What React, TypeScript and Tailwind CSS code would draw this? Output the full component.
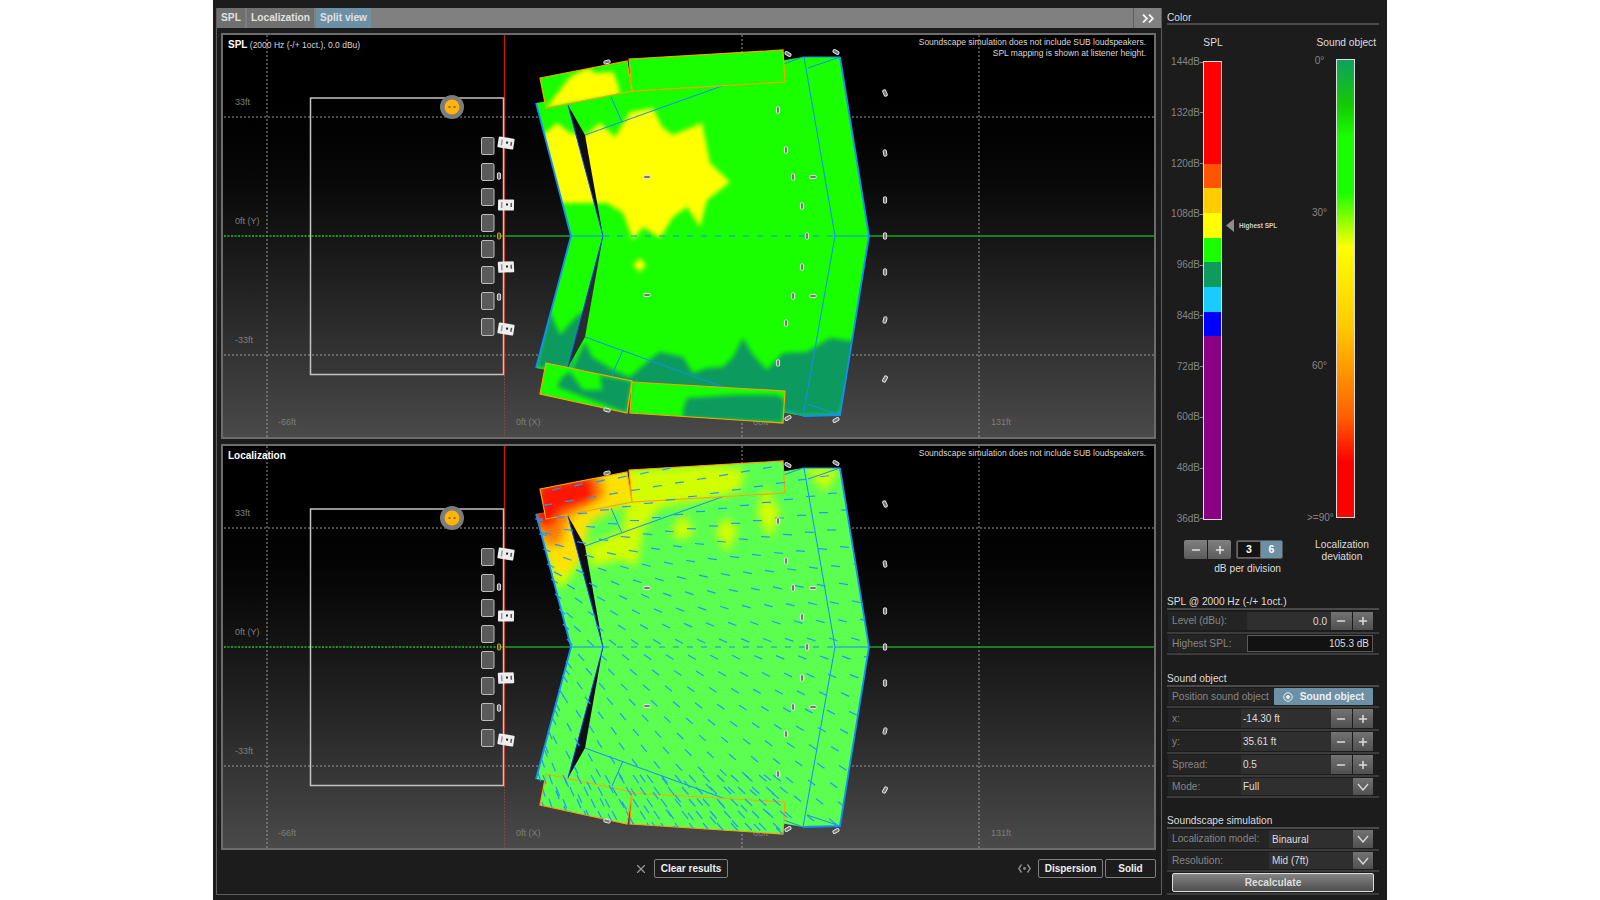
import React from 'react';
import { Minus, Plus, X } from 'lucide-react';

// Geometry is in page pixels of the upper plot; the lower plot uses the same numbers.
const HALL = '536,103 803,57 840,57 869,236 840,415 803,416 536,368 571,236';
const WEDGE_TOP = '568,105 585,135 603,236';
const WEDGE_BOTTOM = '568,367 585,337 603,236';
const BALCONY = [
  '540,78 627,61 632,91 546,108',
  '629,59 783,50 785,82 632,91',
  '546,363 632,381 627,413 540,394',
  '632,382 785,391 783,423 630,413',
];
const HALL_LINES = [
  [585, 135, 803, 57],
  [585, 337, 803, 416],
  [804, 57, 835, 236],
  [835, 236, 803, 416],
  [808, 68, 840, 57],
  [807, 404, 840, 415],
  [611, 97, 622, 122],
  [623, 350, 612, 375],
];

const SPEAKER_ROWS = [146, 172, 197, 223, 249, 275, 301, 327];
const SPEAKER_BOXES = [
  { y: 143, r: 9 },
  { y: 205, r: 1 },
  { y: 267, r: -3 },
  { y: 329, r: 9 },
];
const MARKERS = [
  { x: 885, y: 93, r: -25 },
  { x: 885, y: 153, r: -10 },
  { x: 885, y: 200, r: 0 },
  { x: 885, y: 236, r: 0 },
  { x: 885, y: 272, r: 0 },
  { x: 885, y: 320, r: 15 },
  { x: 885, y: 379, r: 30 },
  { x: 788, y: 54, r: -60 },
  { x: 836, y: 52, r: -60 },
  { x: 788, y: 418, r: 60 },
  { x: 836, y: 420, r: 60 },
  { x: 778, y: 110, r: 0 },
  { x: 786, y: 150, r: 0 },
  { x: 793, y: 177, r: 0 },
  { x: 813, y: 177, r: 90 },
  { x: 802, y: 206, r: 0 },
  { x: 807, y: 236, r: 0 },
  { x: 802, y: 267, r: 0 },
  { x: 793, y: 296, r: 0 },
  { x: 813, y: 296, r: 90 },
  { x: 786, y: 323, r: 0 },
  { x: 778, y: 363, r: 0 },
  { x: 647, y: 177, r: 90 },
  { x: 647, y: 295, r: 90 },
  { x: 607, y: 62, r: 75 },
  { x: 607, y: 410, r: 105 },
  { x: 499, y: 176, r: 0 },
  { x: 499, y: 297, r: 0 },
];

const SPL_YELLOW = [
  '585,135 600,123 615,137 630,112 653,108 662,127 673,135 702,123 710,163 730,182 707,200 700,227 687,207 673,217 660,238 643,227 633,240 623,213 607,203 595,203',
  '633,265 640,258 646,265 640,272',
  '543,135 557,123 570,133 585,135 600,203 560,203',
];
const SPL_TEAL = [
  '573,367 585,342 592,357 613,370 630,377 653,357 660,352 683,357 693,373 707,368 723,367 733,357 743,338 753,355 767,370 783,353 807,352 830,338 859,342 840,415 803,416 720,400 653,400 573,380',
  '549,310 560,335 578,315 585,312 570,368 536,368',
];
const SPL_BALCONY_YELLOW = '546,108 570,77 588,68 595,73 613,72 618,85 620,95';
const SPL_BALCONY_TEAL = [
  '557,387 562,377 570,372 583,390 602,390 600,375 632,381 627,413',
  '683,410 687,398 733,395 777,395 785,400 783,423 683,418',
];

const LOC_LIME = [
  '543,109 573,106 583,139 580,152 563,176 552,172',
  '585,136 623,119 630,59 710,54 745,58 740,80 703,89 660,96 643,119 637,155 625,150 617,149 593,156',
  '683,102 695,122 682,129 670,122',
  '727,106 738,119 727,142 715,119',
  '765,74 780,102 770,129 757,102',
  '805,57 840,57 825,81',
];
const LOC_YELLOW = '534,108 590,62 632,58 632,88 590,112 580,150 560,165 548,150';
const LOC_ORANGE = '534,112 540,74 600,62 606,85 570,106 560,135 546,135';
const LOC_RED = '534,112 538,74 592,64 596,90 562,100 550,118';

// Arrows point away from the sound object
const SOURCE = { x: 453, y: 107 };

function arrow(x: number, y: number, len: number) {
  const a = Math.atan2(y - SOURCE.y, x - SOURCE.x);
  return { x1: x, y1: y, x2: x + Math.cos(a) * len, y2: y + Math.sin(a) * len };
}

function buildArrows() {
  const out: ReturnType<typeof arrow>[] = [];
  for (let row = 0; row < 24; row++) {
    for (let col = 0; col < 16; col++) {
      const x = 530 + col * 22 + (row % 2) * 11 + ((row * 7) % 5);
      const y = 52 + row * 16;
      // rows fan out slightly towards the right
      out.push(arrow(x, y + ((x - 700) * (y - 236)) / 1000, 9));
    }
  }
  // denser field on the lower balcony
  for (let row = 0; row < 5; row++) {
    for (let col = 0; col < 18; col++) {
      out.push(arrow(535 + col * 14 + (row % 2) * 7, 364 + row * 12, 10));
    }
  }
  return out;
}

function buildEdgeArrows() {
  const out: ReturnType<typeof arrow>[] = [];
  for (let i = 0; i < 9; i++) out.push(arrow(535 + i * 4, 108 + i * 15, 8));
  for (let i = 0; i < 9; i++) out.push(arrow(566 - i * 3.5, 250 + i * 14, 9));
  return out;
}

const ARROWS = buildArrows();
const EDGE_ARROWS = buildEdgeArrows();

const Plot: React.FC<{ mode: 'spl' | 'loc' }> = ({ mode }) => {
  const spl = mode === 'spl';
  const clipHall = `hall-${mode}`;
  const clipAll = `all-${mode}`;
  const clipBalcony = `balcony-${mode}`;
  const blur = `blur-${mode}`;
  const base = spl ? '#19ff00' : '#5aff50';

  const locHeat = (
    <g filter={`url(#${blur})`}>
      {LOC_LIME.map((p) => (
        <polygon key={p} points={p} fill="#d2ff00" />
      ))}
      <polygon points={LOC_YELLOW} fill="#ffe000" />
      <polygon points={LOC_ORANGE} fill="#ff8000" />
      <polygon points={LOC_RED} fill="#ff1400" />
    </g>
  );

  return (
    <div className="relative h-[406px] w-[935px] border-2 border-[#6c6c6c] bg-gradient-to-b from-black from-[4%] to-[#4a4a4a]">
      <svg viewBox="223 35 931 402" className="block h-[402px] w-[931px]" fontFamily="'Liberation Sans', Arial, sans-serif">
        <defs>
          <clipPath id={clipHall}>
            <polygon points={HALL} />
          </clipPath>
          <clipPath id={clipBalcony}>
            {BALCONY.map((p) => (
              <polygon key={p} points={p} />
            ))}
          </clipPath>
          <clipPath id={clipAll}>
            <polygon points={HALL} />
            {BALCONY.map((p) => (
              <polygon key={p} points={p} />
            ))}
          </clipPath>
          <filter id={blur} x="-30%" y="-30%" width="160%" height="160%">
            <feGaussianBlur stdDeviation={spl ? 2.2 : 4} />
          </filter>
        </defs>

        {/* grid */}
        <g stroke="#9a9a9a" strokeWidth="1" strokeDasharray="2 2">
          <line x1="224" y1="117" x2="1154" y2="117" />
          <line x1="224" y1="355" x2="1154" y2="355" />
          <line x1="267" y1="35" x2="267" y2="437" />
          <line x1="742" y1="35" x2="742" y2="437" />
          <line x1="979" y1="35" x2="979" y2="437" />
        </g>
        <line x1="224" y1="236" x2="503" y2="236" stroke="#1fc41f" strokeWidth="1.3" strokeDasharray="2 1.5" />
        <line x1="504" y1="236" x2="1154" y2="236" stroke="#1ea01e" strokeWidth="1.4" />
        <line x1="504.5" y1="35" x2="504.5" y2="375" stroke="#c41a00" strokeWidth="1.5" />
        <line x1="504.5" y1="375" x2="504.5" y2="437" stroke="#7a4a40" strokeWidth="1" strokeDasharray="2 1" />

        <g fontSize="9" fill="#7e7e7e">
          <text x="235" y="105">33ft</text>
          <text x="235" y="224">0ft (Y)</text>
          <text x="235" y="343">-33ft</text>
          <text x="278" y="425">-66ft</text>
          <text x="516" y="425">0ft (X)</text>
          <text x="753" y="425">66ft</text>
          <text x="991" y="425">131ft</text>
        </g>

        {/* room */}
        <rect x="310.5" y="98" width="193" height="276.5" fill="none" stroke="#c4c4c4" strokeWidth="1.5" />
        {SPEAKER_ROWS.map((y) => (
          <rect key={y} x="481.5" y={y - 8.5} width="12.5" height="17" rx="1.5" fill="#5a5a5a" stroke="#bdbdbd" strokeWidth="1" />
        ))}
        {SPEAKER_BOXES.map((b) => (
          <g key={b.y} transform={`translate(506 ${b.y}) rotate(${b.r})`}>
            <rect x="-8" y="-5.5" width="16" height="11" rx="1" fill="#eeeeee" />
            <rect x="-5" y="-3" width="1.5" height="6" fill="#999999" />
            <rect x="0" y="-1.5" width="2" height="2" fill="#222222" />
            <rect x="4.5" y="-2" width="1.5" height="4" fill="#555555" />
          </g>
        ))}
        <rect x="497.5" y="233" width="3" height="6" rx="1" fill="#555500" stroke="#c8c820" strokeWidth=".8" />

        <circle cx="452" cy="107" r="12" fill="#7c7c7c" />
        <circle cx="452" cy="107" r="7.5" fill="#ffb40a" />
        <rect x="448.5" y="106.5" width="2" height="1" fill="#332200" />
        <rect x="453.5" y="106.5" width="2" height="1" fill="#332200" />

        {/* coverage */}
        <polygon points={HALL} fill={base} />
        <g clipPath={`url(#${clipHall})`}>
          {spl ? (
            <g filter={`url(#${blur})`}>
              {SPL_TEAL.map((p) => (
                <polygon key={p} points={p} fill="#0f9a5e" />
              ))}
              {SPL_YELLOW.map((p) => (
                <polygon key={p} points={p} fill="#ffff00" />
              ))}
            </g>
          ) : (
            locHeat
          )}
        </g>
        <polygon points={WEDGE_TOP} fill="#0e0e12" />
        <polygon points={WEDGE_BOTTOM} fill={spl ? '#2c2c30' : '#101014'} />
        <g stroke="#128cff" strokeWidth="1" fill="none">
          <polyline points="536,103 571,236 536,368" strokeWidth="1.8" />
          <polyline points="840,57 869,236 840,415 803,416" strokeWidth="1.8" />
          <polyline points="803,57 840,57" />
          <polyline points="568,105 603,236 568,367" stroke="#0a3cff" />
          <line x1="571" y1="236" x2="603" y2="236" />
          <line x1="835" y1="236" x2="869" y2="236" />
          <line x1="603" y1="236" x2="835" y2="236" strokeDasharray="6 8" />
          {HALL_LINES.map((l) => (
            <line key={l.join()} x1={l[0]} y1={l[1]} x2={l[2]} y2={l[3]} />
          ))}
        </g>

        {/* balcony */}
        {BALCONY.map((p) => (
          <polygon key={p} points={p} fill={base} />
        ))}
        <g clipPath={`url(#${clipBalcony})`}>
          {spl ? (
            <g filter={`url(#${blur})`}>
              <polygon points={SPL_BALCONY_YELLOW} fill="#ffff00" />
              {SPL_BALCONY_TEAL.map((p) => (
                <polygon key={p} points={p} fill="#0f9a5e" />
              ))}
            </g>
          ) : (
            locHeat
          )}
        </g>
        {BALCONY.map((p) => (
          <polygon key={p} points={p} fill="none" stroke="#ffa200" strokeWidth="1.2" />
        ))}

        {!spl ? (
          <g stroke="#2098ff" strokeWidth="1.2">
            <g clipPath={`url(#${clipAll})`}>
              {ARROWS.map((a, i) => (
                <line key={i} {...a} />
              ))}
            </g>
            {EDGE_ARROWS.map((a, i) => (
              <line key={i} {...a} />
            ))}
          </g>
        ) : null}

        {MARKERS.map((m) => (
          <rect
            key={`${m.x}-${m.y}`}
            x={m.x - 1.6}
            y={m.y - 3.2}
            width="3.2"
            height="6.4"
            rx="1.2"
            fill="#777777"
            stroke="#eeeeee"
            strokeWidth=".9"
            transform={`rotate(${m.r} ${m.x} ${m.y})`}
          />
        ))}
      </svg>

      {spl ? (
        <>
          <div className="absolute left-[5px] top-[3px] text-[8.5px] leading-[14px] text-[#d8d8d8]">
            <span className="text-[10px] font-bold text-white">SPL</span> (2000 Hz (-/+ 1oct.), 0.0 dBu)
          </div>
          <div className="absolute right-[8px] top-[2px] text-right text-[8.5px] leading-[10.5px] text-[#d8d8d8]">
            Soundscape simulation does not include SUB loudspeakers.
            <br />
            SPL mapping is shown at listener height.
          </div>
        </>
      ) : (
        <>
          <div className="absolute left-[5px] top-[3px] text-[10px] font-bold leading-[14px] text-white">Localization</div>
          <div className="absolute right-[8px] top-[2px] text-right text-[8.5px] leading-[10.5px] text-[#d8d8d8]">
            Soundscape simulation does not include SUB loudspeakers.
          </div>
        </>
      )}
    </div>
  );
};

const SPL_SCALE = ['144dB', '132dB', '120dB', '108dB', '96dB', '84dB', '72dB', '60dB', '48dB', '36dB'];

const SPL_BANDS = [
  'h-[102px] bg-[#ff0000]',
  'h-[24px] bg-[#ff5500]',
  'h-[25px] bg-[#ffcc00]',
  'h-[25px] bg-[#ffff00]',
  'h-[24px] bg-[#19ff00]',
  'h-[25px] bg-[#0f9a5e]',
  'h-[25px] bg-[#19ccff]',
  'h-[24px] bg-[#0000ff]',
  'flex-1 bg-[#8a0082]',
];

const Head: React.FC<{ children: React.ReactNode; className: string }> = ({ children, className }) => (
  <div className={`h-[15px] border-b-2 border-[#4a4a4a] text-[10.2px] leading-[13px] text-[#dddddd] ${className}`}>{children}</div>
);

const Row: React.FC<{ children: React.ReactNode; className: string }> = ({ children, className }) => (
  <div className={`flex items-center border-b-2 border-[#3c3c3c] pl-[1px] pr-[6px] ${className}`}>{children}</div>
);

const Label: React.FC<{ children: React.ReactNode; className: string }> = ({ children, className }) => (
  <div className={`flex h-full shrink-0 items-center bg-[#242424] pl-[4px] text-[10.2px] text-[#858585] ${className}`}>{children}</div>
);

const Steppers: React.FC = () => (
  <div className="flex h-full w-[42px] shrink-0 gap-px">
    <div className="flex flex-1 items-center justify-center bg-gradient-to-b from-[#737373] to-[#505050] text-[#dddddd]">
      <Minus size={12} strokeWidth={3} />
    </div>
    <div className="flex flex-1 items-center justify-center bg-gradient-to-b from-[#737373] to-[#505050] text-[#dddddd]">
      <Plus size={12} strokeWidth={3} />
    </div>
  </div>
);

const Chevron: React.FC = () => (
  <div className="flex h-full w-[20px] shrink-0 items-center justify-center bg-gradient-to-b from-[#737373] to-[#505050]">
    <svg width="12" height="8" viewBox="0 0 12 8" fill="none" stroke="#d8d8d8" strokeWidth="1.4">
      <polyline points="1,1 6,7 11,1" />
    </svg>
  </div>
);

const Field: React.FC<{ children: React.ReactNode; className: string }> = ({ children, className }) => (
  <div className={`flex h-full items-center bg-[#2f2f2f] text-[10px] text-[#dddddd] ${className}`}>{children}</div>
);

const Sidebar: React.FC = () => (
  <aside className="w-[225px] shrink-0 pl-[5px] pr-[8px]">
    <div className="h-[25px] border-b-2 border-[#4a4a4a] pt-[12px] text-[10.2px] leading-[12px] text-[#dddddd]">Color</div>

    <div className="mt-[12px] flex h-[12px] justify-between pr-[3px] text-[10.2px] leading-[12px] text-[#dddddd]">
      <div className="w-[92px] text-center">SPL</div>
      <div>Sound object</div>
    </div>

    <div className="mt-[7px] flex h-[469px]">
      <div className="flex w-[36px] flex-col justify-between text-[10px] leading-[12px] text-[#858585]">
        {SPL_SCALE.map((s) => (
          <div key={s} className="flex items-center justify-end">
            {s}
            <span className="h-px w-[3px] bg-[#858585]" />
          </div>
        ))}
      </div>
      <div className="mt-[5px] flex h-[459px] w-[19px] flex-col border border-[#dddddd]">
        {SPL_BANDS.map((b) => (
          <div key={b} className={b} />
        ))}
      </div>
      <div className="w-[85px] pl-[4px] pt-[163px]">
        <div className="flex items-center gap-[5px]">
          <svg width="8" height="13" viewBox="0 0 8 13">
            <polygon points="8,0 8,13 0,6.5" fill="#8c8c8c" />
          </svg>
          <span className="text-[6.5px] font-bold leading-[13px] text-[#cccccc]">Highest SPL</span>
        </div>
      </div>
      <div className="-mt-[1px] flex h-[469px] w-[25px] flex-col justify-between text-center text-[10px] leading-[12px] text-[#858585]">
        <div>0°</div>
        <div>30°</div>
        <div>60°</div>
        <div>&gt;=90°</div>
      </div>
      <div className="ml-[4px] mt-[3px] h-[459px] w-[19px] border border-[#dddddd] bg-[linear-gradient(to_bottom,#10a060_0%,#14cc00_10%,#19ff00_17%,#19ff00_29%,#ffff00_41%,#ffcc00_58%,#ff6000_78%,#ff0000_88%,#ff0000_100%)]" />
    </div>

    <div className="mt-[15px] flex">
      <div className="ml-[17px] w-[99px]">
        <div className="flex h-[19px] justify-between">
          <div className="flex w-[47px] gap-px overflow-hidden rounded-[2px]">
            <div className="flex flex-1 items-center justify-center bg-gradient-to-b from-[#808080] to-[#5c5c5c] text-[#e6e6e6]">
              <Minus size={12} strokeWidth={3} />
            </div>
            <div className="flex flex-1 items-center justify-center bg-gradient-to-b from-[#808080] to-[#5c5c5c] text-[#e6e6e6]">
              <Plus size={12} strokeWidth={3} />
            </div>
          </div>
          <div className="flex w-[47px] overflow-hidden rounded-[2px] border border-[#555555] text-[10.5px] font-bold text-white">
            <div className="flex w-[24px] items-center justify-center border border-[#666666] bg-[#141414]">3</div>
            <div className="flex flex-1 items-center justify-center bg-[#6c90a6]">6</div>
          </div>
        </div>
        <div className="mt-[4px] pr-[2px] text-right text-[10.2px] leading-[12px] text-[#dddddd]">dB per division</div>
      </div>
      <div className="-mt-[1px] ml-[29px] w-[60px] text-center text-[10.2px] leading-[11.5px] text-[#dddddd]">
        Localization deviation
      </div>
    </div>

    <Head className="mt-[20px]">SPL @ 2000 Hz (-/+ 1oct.)</Head>
    <Row className="h-[24px] py-[2px]">
      <Label className="w-[79px]">Level (dBu):</Label>
      <Field className="flex-1 justify-end pr-[4px]">0.0</Field>
      <Steppers />
    </Row>
    <Row className="h-[21px] py-[1px]">
      <Label className="w-[79px]">Highest SPL:</Label>
      <div className="flex h-full flex-1 items-center justify-end border border-[#5a5a5a] bg-[#121212] pr-[3px] text-[10px] text-[#dddddd]">
        105.3 dB
      </div>
    </Row>

    <Head className="mt-[17px]">Sound object</Head>
    <Row className="h-[21px] py-[1px]">
      <Label className="w-[106px]">Position sound object</Label>
      <div className="flex h-full w-[100px] items-center justify-center gap-[7px] rounded-[1px] bg-[#6c90a6] text-[10.2px] font-bold text-[#eeeeee]">
        <svg width="10" height="10" viewBox="0 0 10 10" fill="none">
          <circle cx="5" cy="5" r="4.2" stroke="#eeeeee" strokeWidth="1" />
          <circle cx="5" cy="5" r="2" fill="#eeeeee" />
        </svg>
        Sound object
      </div>
    </Row>
    {[
      { label: 'x:', value: '-14.30 ft', h: 'h-[23px] py-[1px]' },
      { label: 'y:', value: '35.61 ft', h: 'h-[23px] py-[1px]' },
      { label: 'Spread:', value: '0.5', h: 'h-[23px] py-[1px]' },
    ].map((r) => (
      <Row key={r.label} className={r.h}>
        <Label className="w-[73px]">{r.label}</Label>
        <Field className="flex-1 pl-[2px]">{r.value}</Field>
        <Steppers />
      </Row>
    ))}
    <Row className="h-[21px] py-[1px]">
      <Label className="w-[73px]">Mode:</Label>
      <Field className="flex-1 pl-[2px]">Full</Field>
      <Chevron />
    </Row>

    <Head className="mt-[16px]">Soundscape simulation</Head>
    <Row className="h-[22px] py-[1px]">
      <Label className="w-[101px]">Localization model:</Label>
      <Field className="flex-1 pl-[3px]">Binaural</Field>
      <Chevron />
    </Row>
    <Row className="h-[21px] py-[1px]">
      <Label className="w-[101px]">Resolution:</Label>
      <Field className="flex-1 pl-[3px]">Mid (7ft)</Field>
      <Chevron />
    </Row>
    <div className="h-[23px] border-b-2 border-[#3c3c3c] pl-[5px] pt-px">
      <div className="flex h-[19px] w-[202px] items-center justify-center rounded-[2px] border border-[#dddddd] bg-gradient-to-b from-[#858585] to-[#4e4e4e] text-[10.2px] font-bold text-[#dddddd]">
        Recalculate
      </div>
    </div>
  </aside>
);

const barButton =
  'flex h-[19px] items-center justify-center rounded-[2px] border border-[#808080] bg-[#1c1c1c] text-[10px] font-bold text-[#eeeeee]';

const App: React.FC = () => {
  return (
    <div className="flex h-[900px] w-[1600px] justify-center bg-white font-['Liberation_Sans',Arial,sans-serif]">
      <div className="flex h-[900px] w-[1174px] bg-[#1c1c1c]">
        <div className="ml-[3px] mt-[8px] h-[887px] w-[946px] shrink-0 border-x border-b border-[#5e5e5e]">
          {/* tabs */}
          <div className="flex h-[20px] gap-[2px] bg-[#808080] text-[10.2px] font-bold text-[#e0e0e0]">
            <div className="flex w-[28px] items-center justify-center bg-[#707070]">SPL</div>
            <div className="flex w-[67px] items-center justify-center bg-[#707070]">Localization</div>
            <div className="flex w-[55px] items-center justify-center bg-[#6c90a6]">Split view</div>
            <div className="ml-auto flex w-[28px] items-center justify-center border-l border-[#5e5e5e]">
              <svg width="12" height="9" viewBox="0 0 12 9" fill="none" stroke="#f0f0f0" strokeWidth="1.8">
                <polyline points="1,0.5 5,4.5 1,8.5" />
                <polyline points="7,0.5 11,4.5 7,8.5" />
              </svg>
            </div>
          </div>

          {/* plots */}
          <div className="flex flex-col gap-[5px] pl-[4px] pt-[5px]">
            <Plot mode="spl" />
            <Plot mode="loc" />
          </div>

          {/* bottom bar */}
          <div className="flex h-[44px] items-start pl-[417px] pr-[5px] pt-[9px]">
            <X size={14} strokeWidth={2} className="mt-[3px] text-[#9a9a9a]" />
            <div className={`${barButton} ml-[6px] w-[74px]`}>Clear results</div>
            <svg width="13" height="9" viewBox="0 0 13 9" fill="none" stroke="#8c8c8c" strokeWidth="1.4" className="ml-auto mt-[5px]">
              <polyline points="3.5,0.5 0.8,4.5 3.5,8.5" />
              <polyline points="9.5,0.5 12.2,4.5 9.5,8.5" />
              <circle cx="6.5" cy="4.5" r="1.4" fill="#8c8c8c" stroke="none" />
            </svg>
            <div className={`${barButton} ml-[7px] w-[65px]`}>Dispersion</div>
            <div className={`${barButton} ml-[2px] w-[51px]`}>Solid</div>
          </div>
        </div>
        <Sidebar />
      </div>
    </div>
  );
};

export default App;
